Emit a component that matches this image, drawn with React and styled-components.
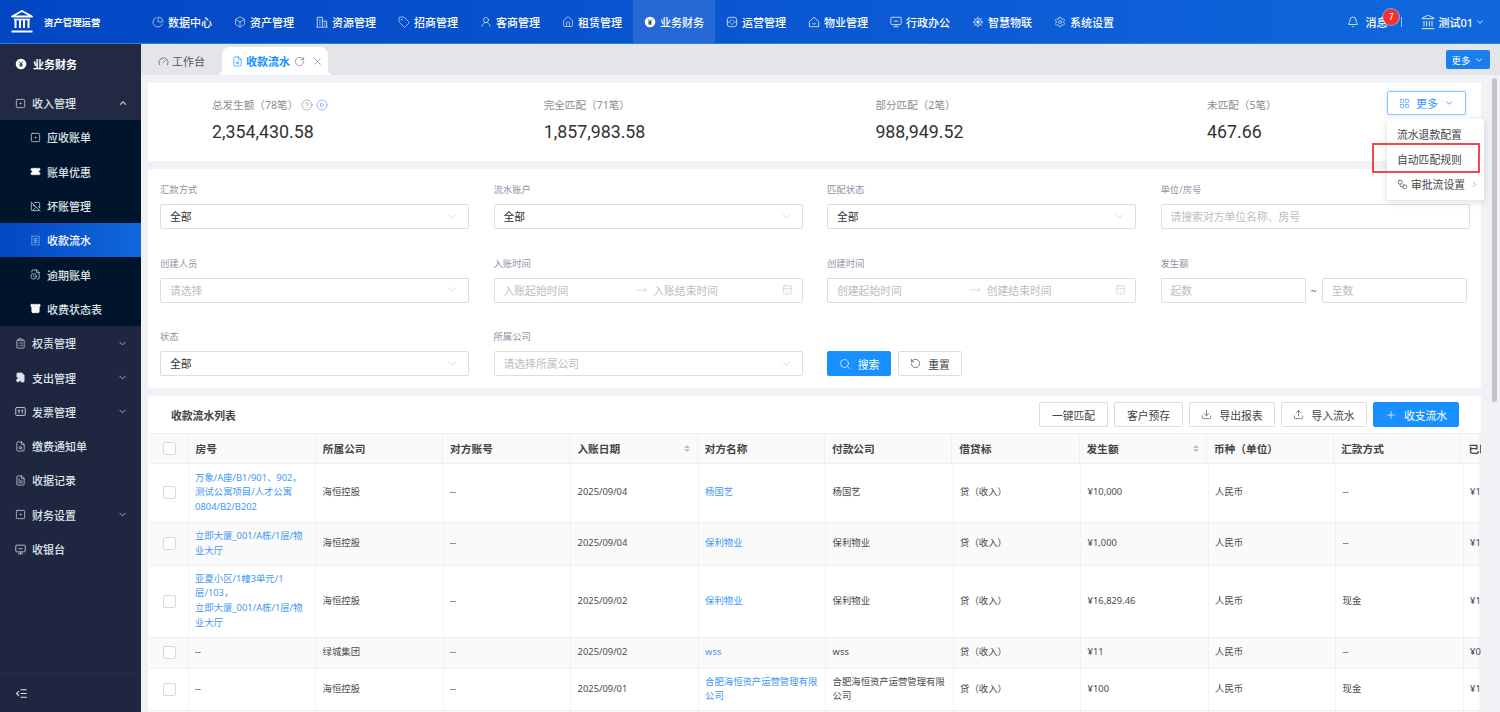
import styled, { createGlobalStyle } from 'styled-components'
import {
  Archive, Bell, Box, CalendarDays, ChartPie, ChevronDown, ChevronRight, ChevronUp,
  CircleHelp, CirclePlay, ClipboardList, Download, FileClock, FileCog, FileSearch, FileText, House,
  IndentDecrease, Landmark, LayoutGrid, MoveRight, Plus, RotateCcw, RotateCw, Search,
  Settings, SquareDot, Tag, Ticket, Upload, UserRound, Workflow, X, Gauge, ImageOff, Receipt,
} from 'lucide-react'

const GlobalStyle = createGlobalStyle`
  html, body { margin: 0; padding: 0; height: 100%; overflow: hidden; }
  body { font-family: "Noto Sans", "Noto Sans CJK SC", sans-serif; font-size: 11px; color: #333; background: #f0f2f5; }
  * { box-sizing: border-box; }
`

const Page = styled.div`
  width: 1500px;
  height: 712px;
  display: flex;
  flex-direction: column;
  overflow: hidden;
`

const TopBar = styled.header`
  height: 44px;
  flex: none;
  display: flex;
  align-items: center;
  color: #fff;
  background: linear-gradient(90deg, #0346c3 0%, #0a58d2 55%, #1068dc 100%);
  border-bottom: 1px solid #2d7de2;
`

const Brand = styled.div`
  width: 141px;
  flex: none;
  padding-left: 10px;
  display: flex;
  align-items: center;
  gap: 10px;
  font-size: 9.4px;
  font-weight: 700;
`

const Nav = styled.nav`
  display: flex;
  height: 100%;
`

const NavItem = styled.div`
  width: 82px;
  padding-left: 11px;
  display: flex;
  align-items: center;
  gap: 4px;
  font-size: 11px;
  font-weight: 500;
  white-space: nowrap;
  background: ${p => (p.$active ? 'rgba(255,255,255,.12)' : 'transparent')};
  svg { color: rgba(255,255,255,.85); flex: none; }
`

const UserArea = styled.div`
  margin-left: auto;
  display: flex;
  align-items: center;
  height: 100%;
  padding-right: 15px;
  font-size: 11px;
  font-weight: 500;
`

const Message = styled.div`
  position: relative;
  display: flex;
  align-items: center;
  gap: 6px;
  padding-right: 14px;
`

const Badge = styled.span`
  position: absolute;
  right: 2px;
  top: -5px;
  width: 16px;
  height: 16px;
  border-radius: 50%;
  background: #f5312e;
  box-shadow: 0 0 0 1px rgba(255,255,255,.45);
  font-size: 8px;
  display: flex;
  align-items: center;
  justify-content: center;
`

const Divider = styled.span`
  width: 1px;
  height: 10px;
  background: rgba(255,255,255,.6);
  margin-right: 18px;
`

const Account = styled.div`
  display: flex;
  align-items: center;
  gap: 2px;
`

const Body = styled.div`
  flex: 1;
  display: flex;
  min-height: 0;
`

const Sidebar = styled.aside`
  width: 141px;
  flex: none;
  display: flex;
  flex-direction: column;
  background: #1e2640;
  color: #dfe3ea;
`

const SideHead = styled.div`
  height: 42px;
  padding: 0 0 2px 15px;
  display: flex;
  align-items: center;
  gap: 6px;
  color: #fff;
  font-weight: 700;
  background: #222a43;
`

const SideRow = styled.div`
  height: 34.3px;
  flex: none;
  padding: 0 13px 0 15px;
  display: flex;
  align-items: center;
  gap: 6px;
  font-weight: 500;
  background: ${p => (p.$open ? '#222a43' : 'transparent')};
  span { flex: 1; }
  svg:last-child:not(:first-child) { opacity: .75; }
`

const SubMenu = styled.div`
  background: #00152b;
`

const SubRow = styled.div`
  height: 34.3px;
  padding-left: 30px;
  display: flex;
  align-items: center;
  gap: 6px;
  font-weight: 500;
  color: ${p => (p.$active ? '#fff' : '#dfe3ea')};
  background: ${p => (p.$active ? 'linear-gradient(90deg, #0347c2, #1068dc)' : 'transparent')};
  svg { color: ${p => (p.$active ? '#8db9f5' : '#e6e8ee')}; }
`

const SideFoot = styled.div`
  margin-top: auto;
  height: 39px;
  padding-left: 15px;
  display: flex;
  align-items: center;
  border-top: 1px solid #283049;
`

const Main = styled.main`
  flex: 1;
  min-width: 0;
  display: flex;
  flex-direction: column;
  background: #f0f2f5;
`

const TabBar = styled.div`
  height: 31px;
  flex: none;
  display: flex;
  align-items: flex-end;
  padding: 0 10px 0 7px;
  background: #e4e5e8;
`

const Tab = styled.div`
  position: relative;
  height: 28px;
  display: flex;
  align-items: center;
  gap: 3px;
  padding: 0 ${p => (p.$active ? '5px' : '10px')} 0 10px;
  margin-right: ${p => (p.$active ? '0' : '7px')};
  border-radius: 8px 8px 0 0;
  color: ${p => (p.$active ? '#1890ff' : '#555')};
  font-weight: ${p => (p.$active ? 700 : 400)};
  background: ${p => (p.$active ? '#fff' : 'transparent')};
  svg { flex: none; }
  ${p => p.$active && `
    &::before, &::after {
      content: "";
      position: absolute;
      bottom: 0;
      width: 6px;
      height: 6px;
    }
    &::before { left: -6px; background: radial-gradient(circle at 0 0, transparent 6px, #fff 6.5px); }
    &::after { right: -6px; background: radial-gradient(circle at 100% 0, transparent 6px, #fff 6.5px); }
  `}
`

const TabTools = styled.span`
  display: flex;
  align-items: center;
  gap: 7px;
  margin-left: 1px;
  color: #777;
`

const TabMore = styled.button`
  margin: 0 0 6px auto;
  width: 44px;
  height: 19px;
  padding: 0;
  border: 0;
  border-radius: 2px;
  display: flex;
  align-items: center;
  justify-content: center;
  gap: 4px;
  color: #fff;
  background: #1a7fec;
  font: inherit;
  font-size: 9.4px;
`

const Content = styled.div`
  position: relative;
  flex: 1;
  min-height: 0;
  overflow: hidden;
  padding: 8px 19px 0 7px;
  display: flex;
  flex-direction: column;
  gap: 8px;
`

const Thumb = styled.div`
  position: absolute;
  right: 3px;
  top: 3px;
  width: 5px;
  height: 324px;
  border-radius: 3px;
  background: #c4c4c6;
`

const Card = styled.section`
  background: #fff;
  flex: none;
`

const StatCard = styled(Card)`
  position: relative;
  height: 78px;
  padding: 14px 0 0 64px;
  display: grid;
  grid-template-columns: repeat(4, 331.7px);
`

const Stat = styled.div`
  display: flex;
  flex-direction: column;
  gap: 9px;
`

const StatLabel = styled.div`
  display: flex;
  align-items: center;
  gap: 3px;
  height: 15px;
  color: #8c8c8c;
  font-size: 10.6px;
  svg { color: #8c8c8c; }
`

const StatValue = styled.div`
  font-family: Roboto, "Noto Sans", sans-serif;
  font-size: 17.8px;
  line-height: 22px;
  color: #333;
`

const MoreButton = styled.button`
  position: absolute;
  left: 1239px;
  top: 8px;
  width: 79px;
  height: 24px;
  padding: 0;
  display: flex;
  align-items: center;
  justify-content: center;
  gap: 6px;
  border: 1px solid #8cc5ff;
  border-radius: 2px;
  color: #4096ff;
  background: #fff;
  font: inherit;
  box-shadow: 0 0 3px rgba(24,144,255,.25);
`

const Menu = styled.div`
  position: absolute;
  left: 1239px;
  top: 36px;
  z-index: 3;
  width: 97px;
  height: 81px;
  padding-top: 2.5px;
  background: #fff;
  box-shadow: 0 2px 8px rgba(0,0,0,.14);
`

const MenuItem = styled.div`
  height: 25px;
  padding-left: 10px;
  display: flex;
  align-items: center;
  gap: 3px;
  font-size: 10.8px;
  color: #444;
  white-space: nowrap;
  svg:last-child { margin-left: 2px; color: #999; }
`

const Highlight = styled.div`
  position: absolute;
  left: 1224px;
  top: 60px;
  z-index: 4;
  width: 108px;
  height: 30px;
  border: 2.5px solid #f0484a;
`

const FilterCard = styled(Card)`
  height: 219px;
  padding: 15px 0 0 12px;
  display: grid;
  grid-template-columns: repeat(4, 333.5px);
  grid-auto-rows: 73.7px;
`

const Field = styled.div`
  display: flex;
  flex-direction: column;
  gap: 8px;
`

const Label = styled.label`
  height: 12px;
  line-height: 12px;
  font-size: 9.35px;
  color: #8d93a3;
`

const Control = styled.div`
  width: ${p => p.$w || '309px'};
  height: 25px;
  padding: 0 9px 1px;
  display: flex;
  align-items: center;
  border: 1px solid #dedede;
  border-radius: 2px;
  font-size: 10.8px;
  white-space: nowrap;
  color: ${p => (p.$ph ? '#bdbdbd' : '#333')};
  svg { margin-left: auto; color: #c4c4c4; flex: none; }
`

const RangeEnd = styled.span`
  margin-left: 6px;
`

const RangeArrow = styled(MoveRight)`
  margin-left: 67px !important;
`

const Pair = styled.div`
  display: flex;
  align-items: center;
  color: #777;
  gap: 5px;
`

const Actions = styled.div`
  display: flex;
  gap: 7px;
  padding-top: 20px;
`

const Btn = styled.button`
  width: ${p => p.$w};
  height: 25px;
  padding: 0;
  display: flex;
  align-items: center;
  justify-content: center;
  gap: ${p => p.$gap || '7px'};
  border: 1px solid ${p => (p.$primary ? '#1890ff' : '#dcdcdc')};
  border-radius: 2px;
  color: ${p => (p.$primary ? '#fff' : '#444')};
  background: ${p => (p.$primary ? '#1890ff' : '#fff')};
  font: inherit;
  font-size: 10.8px;
`

const ListCard = styled(Card)`
  position: relative;
  flex: 1;
  overflow: hidden;
`

const ListHead = styled.div`
  height: 37px;
  padding: 0 22px 0 23px;
  display: flex;
  align-items: center;
  justify-content: space-between;
`

const ListTitle = styled.h2`
  margin: 0;
  font-size: 10.8px;
  font-weight: 700;
  color: #444;
`

const ListActions = styled.div`
  display: flex;
  gap: 6px;
`

const TableWrap = styled.div`
  margin-left: 1px;
  overflow: hidden;
`

const Table = styled.table`
  width: ${p => p.$w}px;
  table-layout: fixed;
  border-collapse: collapse;
`

const HeadTable = styled(Table)`
  border-top: 1px solid #f0f0f0;
`

const Th = styled.th`
  height: 30px;
  padding: 0 7px;
  text-align: left;
  font-size: 10.7px;
  font-weight: 700;
  color: #444;
  white-space: nowrap;
  background: #fafafa;
  border-right: 1px solid #f0f0f0;
  border-bottom: 1px solid #f0f0f0;
`

const SortWrap = styled.div`
  display: flex;
  align-items: center;
  justify-content: space-between;
`

const Sorter = styled.span`
  display: flex;
  flex-direction: column;
  gap: 1px;
  &::before, &::after {
    content: "";
    width: 0;
    height: 0;
    border-left: 3px solid transparent;
    border-right: 3px solid transparent;
  }
  &::before { border-bottom: 3.5px solid #bfbfbf; }
  &::after { border-top: 3.5px solid #bfbfbf; }
`

const Tr = styled.tr`
  background: ${p => (p.$alt ? '#fafafa' : '#fff')};
`

const Td = styled.td`
  padding: 6px 6.6px;
  height: ${p => p.$h};
  font-size: 9.35px;
  line-height: 14.7px;
  color: ${p => (p.$link ? '#3f97f5' : '#4a4a4a')};
  border-right: 1px solid #f2f2f2;
  border-bottom: 1px solid #f0f0f0;
  white-space: nowrap;
  overflow: hidden;
`

const Check = styled.span`
  display: block;
  width: 13px;
  height: 13px;
  margin-left: 7px;
  background: #fff;
  border: 1px solid #d9d9d9;
  border-radius: 2px;
`

const EdgeShadow = styled.div`
  position: absolute;
  right: 0;
  top: 37px;
  bottom: 0;
  width: 3px;
  background: linear-gradient(90deg, rgba(0,0,0,0), rgba(0,0,0,.05));
`

const YuanIcon = ({ size = 14 }) => (
  <svg width={size} height={size} viewBox="0 0 14 14">
    <circle cx="7" cy="7" r="6.2" fill="#fff" />
    <path d="M5 4.2 7 7l2-2.8M5 7.4h4M5 9.2h4M7 7v3.2" stroke="#1e2640" strokeWidth="1" fill="none" />
  </svg>
)

const BankLogo = () => (
  <svg width="24" height="23" viewBox="0 0 24 23" fill="none" stroke="#fff">
    <path d="M12 1 2 6.5h20L12 1Z" strokeWidth="1.8" strokeLinejoin="round" />
    <path d="M4 9.5h16" strokeWidth="1.6" />
    <path d="M5.5 10v8M10 10v8M14 10v8M18.5 10v8" strokeWidth="2" />
    <path d="M1.5 21.5h21" strokeWidth="2" />
  </svg>
)

const TowerIcon = ({ size }) => (
  <svg width={size} height={size} viewBox="0 0 14 14" fill="none" stroke="currentColor" strokeWidth="1">
    <path d="M1.5 13V1.5h6V13M7.5 6h5V13M.5 13h13M3.5 4.5h2M3.5 7h2M3.5 9.5h2M9.5 8.5h1.5M9.5 10.5h1.5" />
  </svg>
)

const OpsIcon = ({ size }) => (
  <svg width={size} height={size} viewBox="0 0 14 14" fill="none" stroke="currentColor" strokeWidth="1">
    <rect x="1.5" y="1.5" width="11" height="11" rx="3" />
    <circle cx="7" cy="7" r="2.6" strokeDasharray="2 1" />
    <path d="M1.5 7h2M10.5 7h2" />
  </svg>
)

const SmileHouseIcon = ({ size }) => (
  <svg width={size} height={size} viewBox="0 0 14 14" fill="none" stroke="currentColor" strokeWidth="1">
    <path d="M1.5 6.5 7 1.5l5.5 5V12.5h-11Z" strokeLinejoin="round" />
    <path d="M4.8 8.5c1 1.3 3.4 1.3 4.4 0" />
  </svg>
)

const ScreenIcon = ({ size }) => (
  <svg width={size} height={size} viewBox="0 0 14 14" fill="none" stroke="currentColor" strokeWidth="1">
    <rect x="1" y="1.5" width="12" height="8.5" rx="1" />
    <path d="M4.5 6h5M7 10v2.5M4 12.5h6" />
  </svg>
)

const IotIcon = ({ size }) => (
  <svg width={size} height={size} viewBox="0 0 14 14" fill="none" stroke="currentColor">
    <circle cx="7" cy="7" r="2" fill="currentColor" strokeWidth="0" />
    <circle cx="7" cy="7" r="4" strokeWidth="1" />
    <path d="M7 .8v2M7 11.2v2M.8 7h2M11.2 7h2M2.6 2.6 4 4M10 10l1.4 1.4M11.4 2.6 10 4M4 10l-1.4 1.4" strokeWidth="1" />
  </svg>
)

const InvoiceIcon = ({ size }) => (
  <svg width={size} height={size} viewBox="0 0 14 14" fill="none" stroke="currentColor" strokeWidth="1.1">
    <rect x="1" y="2" width="12" height="10" rx="1" />
    <path d="M3.5 5.5h3M5 5.5v4M8 5.5h2.5M9.2 5.5v4" />
  </svg>
)

const FilledTicket = ({ size }) => <Ticket size={size} fill="#fff" strokeWidth={1.2} />
const FilledArchive = ({ size }) => <Archive size={size} fill="#fff" stroke="#fff" strokeWidth={1.5} />
const FilledCog = ({ size }) => <FileCog size={size} fill="#dfe3ea" strokeWidth={1.4} />

const navItems = [
  ['数据中心', ChartPie], ['资产管理', Box], ['资源管理', TowerIcon], ['招商管理', Tag], ['客商管理', UserRound],
  ['租赁管理', House], ['业务财务', YuanIcon, true], ['运营管理', OpsIcon], ['物业管理', SmileHouseIcon],
  ['行政办公', ScreenIcon], ['智慧物联', IotIcon], ['系统设置', Settings],
]

const subItems = [
  ['应收账单', SquareDot], ['账单优惠', FilledTicket], ['坏账管理', ImageOff], ['收款流水', Receipt, true],
  ['逾期账单', FileClock], ['收费状态表', FilledArchive],
]

const sideItems = [
  ['权责管理', ClipboardList, true], ['支出管理', FilledCog, true], ['发票管理', InvoiceIcon, true],
  ['缴费通知单', FileSearch], ['收据记录', FileText], ['财务设置', SquareDot, true], ['收银台', ScreenIcon],
]

const stats = [
  ['总发生额（78笔）', '2,354,430.58', true], ['完全匹配（71笔）', '1,857,983.58'],
  ['部分匹配（2笔）', '988,949.52'], ['未匹配（5笔）', '467.66'],
]

const columns = [
  ['房号'], ['所属公司'], ['对方账号'], ['入账日期', true], ['对方名称'], ['付款公司'], ['借贷标'],
  ['发生额', true], ['币种（单位）'], ['汇款方式'], ['已匹配金额'],
]

const rows = [
  { h: '58px', room: ['万象/A座/B1/901、902，', '测试公寓项目/人才公寓', '0804/B2/B202'], co: '海恒控股', date: '2025/09/04', name: ['杨国艺'], amount: '¥10,000', way: '--', done: '¥10,000' },
  { h: '43px', room: ['立即大厦_001/A栋/1层/物', '业大厅'], co: '海恒控股', date: '2025/09/04', name: ['保利物业'], amount: '¥1,000', way: '--', done: '¥1,000' },
  { h: '72px', room: ['亚夏小区/1幢3单元/1', '层/103，', '立即大厦_001/A栋/1层/物', '业大厅'], co: '海恒控股', date: '2025/09/02', name: ['保利物业'], amount: '¥16,829.46', way: '现金', done: '¥16,829.46' },
  { h: '31px', room: null, co: '绿城集团', date: '2025/09/02', name: ['wss'], amount: '¥11', way: '--', done: '¥0' },
  { h: '42px', room: null, co: '海恒控股', date: '2025/09/01', name: ['合肥海恒资产运营管理有限', '公司'], amount: '¥100', way: '现金', done: '¥100' },
  { h: '31px', room: null, co: '海恒控股', date: '2025/09/01', name: ['保利物业'], amount: '¥100', way: '--', done: '¥100' },
]

const Lines = ({ items }) => items.map((line, i) => <div key={i}>{line}</div>)

const Caret = () => <ChevronDown size={13} strokeWidth={1.2} />

const App = () => (
  <Page>
    <GlobalStyle />
    <TopBar>
      <Brand><BankLogo />资产管理运营</Brand>
      <Nav>
        {navItems.map(([label, Icon, active]) => (
          <NavItem key={label} $active={active}>
            <Icon size={12} strokeWidth={1.4} />
            {label}
          </NavItem>
        ))}
      </Nav>
      <UserArea>
        <Message>
          <Bell size={12} strokeWidth={1.5} />
          <span>消息</span>
          <Badge>7</Badge>
        </Message>
        <Divider />
        <Account>
          <Landmark size={16} strokeWidth={1.3} />
          测试01
          <ChevronDown size={10} />
        </Account>
      </UserArea>
    </TopBar>
    <Body>
      <Sidebar>
        <SideHead><YuanIcon size={12} />业务财务</SideHead>
        <SideRow $open>
          <SquareDot size={11} strokeWidth={1.5} />
          <span>收入管理</span>
          <ChevronUp size={10} strokeWidth={3} />
        </SideRow>
        <SubMenu>
          {subItems.map(([label, Icon, active]) => (
            <SubRow key={label} $active={active}>
              <Icon size={11} strokeWidth={1.5} />
              {label}
            </SubRow>
          ))}
        </SubMenu>
        {sideItems.map(([label, Icon, more]) => (
          <SideRow key={label}>
            <Icon size={11} strokeWidth={1.5} />
            <span>{label}</span>
            {more && <ChevronDown size={11} strokeWidth={2} />}
          </SideRow>
        ))}
        <SideFoot><IndentDecrease size={13} strokeWidth={2} /></SideFoot>
      </Sidebar>
      <Main>
        <TabBar>
          <Tab>
            <Gauge size={11} strokeWidth={1.6} />
            工作台
          </Tab>
          <Tab $active>
            <FileSearch size={11} strokeWidth={1.4} />
            收款流水
            <TabTools>
              <RotateCw size={11} strokeWidth={1.5} />
              <X size={11} strokeWidth={1.5} />
            </TabTools>
          </Tab>
          <TabMore>更多<ChevronDown size={10} /></TabMore>
        </TabBar>
        <Content>
          <Thumb />
          <StatCard>
            {stats.map(([label, value, help]) => (
              <Stat key={label}>
                <StatLabel>
                  {label}
                  {help && <CircleHelp size={12} strokeWidth={1.3} />}
                  {help && <CirclePlay size={12} strokeWidth={1.3} color="#6f8ff5" />}
                </StatLabel>
                <StatValue>{value}</StatValue>
              </Stat>
            ))}
            <MoreButton><LayoutGrid size={11} strokeWidth={1.4} />更多<ChevronDown size={10} /></MoreButton>
            <Menu>
              <MenuItem>流水退款配置</MenuItem>
              <MenuItem>自动匹配规则</MenuItem>
              <MenuItem><Workflow size={11} strokeWidth={1.4} />审批流设置<ChevronRight size={9} /></MenuItem>
            </Menu>
            <Highlight />
          </StatCard>
          <FilterCard>
            <Field><Label>汇款方式</Label><Control>全部<Caret /></Control></Field>
            <Field><Label>流水账户</Label><Control>全部<Caret /></Control></Field>
            <Field><Label>匹配状态</Label><Control>全部<Caret /></Control></Field>
            <Field><Label>单位/房号</Label><Control $ph>请搜索对方单位名称、房号</Control></Field>
            <Field><Label>创建人员</Label><Control $ph>请选择<Caret /></Control></Field>
            <Field>
              <Label>入账时间</Label>
              <Control $ph>入账起始时间<RangeArrow size={12} strokeWidth={1.2} /><RangeEnd>入账结束时间</RangeEnd><CalendarDays size={11} strokeWidth={1.2} /></Control>
            </Field>
            <Field>
              <Label>创建时间</Label>
              <Control $ph>创建起始时间<RangeArrow size={12} strokeWidth={1.2} /><RangeEnd>创建结束时间</RangeEnd><CalendarDays size={11} strokeWidth={1.2} /></Control>
            </Field>
            <Field>
              <Label>发生额</Label>
              <Pair><Control $ph $w="145px">起数</Control>~<Control $ph $w="145px">至数</Control></Pair>
            </Field>
            <Field><Label>状态</Label><Control>全部<Caret /></Control></Field>
            <Field><Label>所属公司</Label><Control $ph>请选择所属公司<Caret /></Control></Field>
            <Actions>
              <Btn $primary $w="64px"><Search size={12} strokeWidth={1.4} />搜索</Btn>
              <Btn $w="64px"><RotateCcw size={11} strokeWidth={1.5} />重置</Btn>
            </Actions>
          </FilterCard>
          <ListCard>
            <ListHead>
              <ListTitle>收款流水列表</ListTitle>
              <ListActions>
                <Btn $w="69px">一键匹配</Btn>
                <Btn $w="69px">客户预存</Btn>
                <Btn $w="86px"><Download size={11} strokeWidth={1.4} />导出报表</Btn>
                <Btn $w="86px"><Upload size={11} strokeWidth={1.4} />导入流水</Btn>
                <Btn $primary $w="86px"><Plus size={12} strokeWidth={1.4} />收支流水</Btn>
              </ListActions>
            </ListHead>
            <TableWrap>
              <HeadTable $w={1439}>
                <colgroup>
                  <col style={{ width: 39 }} />
                  {columns.map(([title]) => <col key={title} style={{ width: 127.3 }} />)}
                </colgroup>
                <thead>
                  <tr>
                    <Th><Check /></Th>
                    {columns.map(([title, sort]) => (
                      <Th key={title}>
                        {sort ? <SortWrap>{title}<Sorter /></SortWrap> : title}
                      </Th>
                    ))}
                  </tr>
                </thead>
              </HeadTable>
              <Table $w={1441.5}>
                <colgroup>
                  <col style={{ width: 39 }} />
                  {columns.map(([title]) => <col key={title} style={{ width: 127.5 }} />)}
                </colgroup>
                <tbody>
                  {rows.map((row, i) => (
                    <Tr key={i} $alt={i % 2 === 1}>
                      <Td $h={row.h}><Check /></Td>
                      <Td $link={!!row.room}>{row.room ? <Lines items={row.room} /> : '--'}</Td>
                      <Td>{row.co}</Td>
                      <Td>--</Td>
                      <Td>{row.date}</Td>
                      <Td $link><Lines items={row.name} /></Td>
                      <Td><Lines items={row.name} /></Td>
                      <Td>贷（收入）</Td>
                      <Td>{row.amount}</Td>
                      <Td>人民币</Td>
                      <Td>{row.way}</Td>
                      <Td>{row.done}</Td>
                    </Tr>
                  ))}
                </tbody>
              </Table>
            </TableWrap>
            <EdgeShadow />
          </ListCard>
        </Content>
      </Main>
    </Body>
  </Page>
)

export default App
